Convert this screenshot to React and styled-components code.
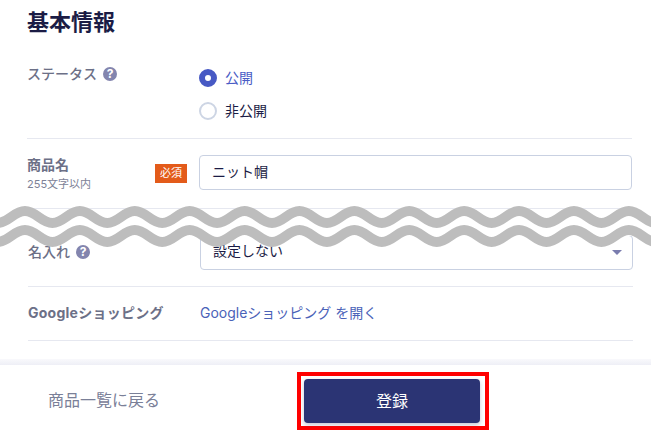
import React from "react";
import styled, { createGlobalStyle } from "styled-components";

const Global = createGlobalStyle`
  html, body { margin: 0; padding: 0; background: #fff; }
  body { font-family: Inter, "Noto Sans CJK JP", sans-serif; font-size: 14px; color: #1b1c45; }
  * { box-sizing: border-box; }
`;

const Page = styled.div`
  position: relative;
  width: 651px;
  height: 442px;
  overflow: hidden;
  display: flex;
  flex-direction: column;
`;

const UpperPart = styled.section`
  height: 225px;
  padding: 0 19px 0 27px;
  overflow: hidden;
`;

const LowerPart = styled.section`
  height: 140px;
  padding: 10px 18px 0 28px;
`;

const Heading = styled.h2`
  margin: 0;
  height: 46px;
  padding-top: 7px;
  font-size: 22px;
  line-height: 30px;
  font-weight: 700;
  color: #1b1c45;
`;

const Row = styled.div`
  display: flex;
  height: ${(p) => p.$h}px;
  padding-top: ${(p) => p.$pt || 0}px;
  border-bottom: 1px solid #e6e8f0;
`;

const LabelCol = styled.div`
  width: 172px;
  flex: none;
  display: flex;
  align-items: flex-start;
  justify-content: space-between;
`;

const LabelText = styled.div`
  display: flex;
  align-items: center;
  gap: 6px;
  font-size: 14px;
  line-height: 20px;
  font-weight: ${(p) => p.$weight || 700};
  letter-spacing: ${(p) => p.$track || 0}px;
  color: #6c7087;
  margin-top: ${(p) => p.$mt || 0}px;
`;

const Help = styled.span`
  width: 14px;
  height: 14px;
  border-radius: 50%;
  background: #8385ae;
  color: #fff;
  font-size: 12px;
  line-height: 14px;
  font-weight: 700;
  text-align: center;
`;

const Hint = styled.div`
  margin-top: 2px;
  font-size: 11px;
  line-height: 14px;
  color: #7d8297;
`;

const Required = styled.span`
  margin-top: 9px;
  margin-right: 12px;
  width: 32px;
  height: 19px;
  background: #e35b1a;
  color: #fff;
  font-size: 11px;
  line-height: 19px;
  text-align: center;
`;

const RadioGroup = styled.div`
  display: flex;
  flex-direction: column;
  gap: 15px;
  padding-top: 5px;
`;

const RadioRow = styled.label`
  display: flex;
  align-items: center;
  gap: 8px;
  height: 18px;
  font-size: 14px;
  line-height: 18px;
  color: ${(p) => (p.$on ? "#4a5cc5" : "#1b1c45")};
`;

const RadioDot = styled.span`
  width: 18px;
  height: 18px;
  border-radius: 50%;
  background: #fff;
  border: ${(p) => (p.$on ? "6px solid #4759c4" : "2px solid #cdd5e4")};
`;

const Field = styled.div`
  flex: 1;
  height: 35px;
  display: flex;
  align-items: center;
  padding: 0 12px ${(p) => p.$pb || 3}px;
  position: relative;
  border: 1px solid #c9d1e2;
  border-radius: 4px;
  font-size: 14px;
  color: #1b1c45;
  background: #fff;
`;

const Caret = styled.span`
  position: absolute;
  right: 10px;
  top: 14px;
  width: 0;
  height: 0;
  border-left: 5px solid transparent;
  border-right: 5px solid transparent;
  border-top: 5px solid #7a7cae;
`;

const Link = styled.a`
  color: #4a62b8;
  font-size: 14px;
  line-height: 20px;
`;

const Footer = styled.footer`
  position: relative;
  flex: 1;
  display: flex;
  align-items: flex-start;
  padding: 7px 0 0 48px;
  background: #fff;

  &::before {
    content: "";
    position: absolute;
    left: 0;
    right: 0;
    top: -6px;
    height: 6px;
    background: linear-gradient(#f9f9fc, #eeeff6);
  }
`;

const BackLink = styled.a`
  width: 249px;
  flex: none;
  margin-top: 16px;
  font-size: 16px;
  line-height: 24px;
  color: #7a8098;
`;

const Highlight = styled.div`
  border: 4px solid #ff0000;
  padding: 3px;
  width: 192px;
  height: 58px;
`;

const SubmitButton = styled.button`
  display: block;
  width: 176px;
  height: 44px;
  padding: 0 0 3px;
  border: 0;
  border-radius: 4px;
  background: #2b3474;
  color: #fff;
  font: inherit;
  font-size: 16px;
  box-shadow: 0 2px 4px rgba(60, 65, 110, 0.3);
`;

const WaveSvg = styled.svg`
  position: absolute;
  left: 0;
  top: 200px;
  width: 651px;
  height: 54px;
`;

function wave(y) {
  const P = 54.9;
  let d = `M${-2.5 - P} ${y + 12}`;
  for (let i = -1; i < 14; i++) {
    const x = -2.5 + i * P;
    d += ` C${x + P * 0.2} ${y + 12} ${x + P * 0.3} ${y} ${x + P / 2} ${y}`;
    d += ` C${x + P * 0.7} ${y} ${x + P * 0.8} ${y + 12} ${x + P} ${y + 12}`;
  }
  return d;
}

const Wave = () => {
  const a = wave(11);
  const b = wave(30);
  return (
    <WaveSvg viewBox="0 0 651 54" aria-hidden="true">
      <rect x="0" y="24" width="651" height="12" fill="#fff" />
      <path d={a} fill="none" stroke="#bdbdbd" strokeWidth="10" />
      <path d={b} fill="none" stroke="#bdbdbd" strokeWidth="10" />
    </WaveSvg>
  );
};

export default function App() {
  return (
    <Page>
      <Global />
      <UpperPart>
        <Heading>基本情報</Heading>
        <Row $h={93} $pt={18}>
          <LabelCol>
            <LabelText $weight={500}>ステータス<Help>?</Help></LabelText>
          </LabelCol>
          <RadioGroup>
            <RadioRow $on><RadioDot $on />公開</RadioRow>
            <RadioRow><RadioDot />非公開</RadioRow>
          </RadioGroup>
        </Row>
        <Row $h={70} $pt={16}>
          <LabelCol>
            <div>
              <LabelText>商品名</LabelText>
              <Hint>255文字以内</Hint>
            </div>
            <Required>必須</Required>
          </LabelCol>
          <Field>ニット帽</Field>
        </Row>
      </UpperPart>
      <LowerPart>
        <Row $h={52}>
          <LabelCol>
            <LabelText $weight={500} $mt={7}>名入れ<Help>?</Help></LabelText>
          </LabelCol>
          <Field $pb={5}>設定しない<Caret /></Field>
        </Row>
        <Row $h={54} $pt={16}>
          <LabelCol>
            <LabelText $track={0.25}>Googleショッピング</LabelText>
          </LabelCol>
          <Link>Googleショッピング を開く</Link>
        </Row>
      </LowerPart>
      <Footer>
        <BackLink>商品一覧に戻る</BackLink>
        <Highlight>
          <SubmitButton>登録</SubmitButton>
        </Highlight>
      </Footer>
      <Wave />
    </Page>
  );
}
